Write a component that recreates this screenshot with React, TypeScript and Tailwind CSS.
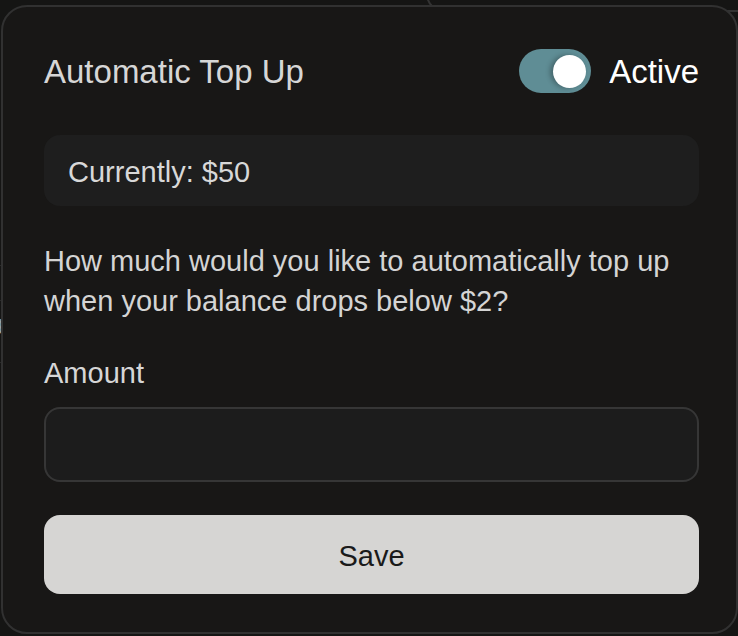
import React from "react";

export default function App() {
  return (
    <div
      className="relative w-[738px] h-[636px] overflow-hidden bg-[#151514]"
      style={{ fontFamily: '"Liberation Sans", Arial, sans-serif' }}
    >
      {/* page content peeking out behind the dialog */}
      <div className="absolute left-[426px] top-[-40px] w-[340px] h-[52px] rounded-[18px] border-2 border-[#333333]" />
      <div className="absolute left-[-4px] top-[265px] w-[6px] h-px bg-[#2a2a2a]" />
      <div className="absolute left-[-4px] top-[300px] w-[6px] h-px bg-[#2a2a2a]" />
      <div className="absolute left-[-4px] top-[362px] w-[6px] h-px bg-[#2a2a2a]" />
      <div className="absolute left-[-8px] top-[311px] text-[20px] leading-[24px] text-[#a0a0a0]">g</div>

      <div className="relative mt-[5px] ml-[1px] w-[737px] h-[629px] rounded-[26px] border-2 border-[#313131] bg-[#181716] pt-[42px] pb-[38px] pl-[41px] pr-[37px] flex flex-col">
        <div className="flex items-center justify-between h-[44px]">
          <span className="pt-[2px] text-[33px] leading-[40px] text-[#d6d6d6]">Automatic Top Up</span>
          <div className="flex items-center gap-[18px]">
            <div className="w-[72px] h-[44px] rounded-full bg-[#5f8d95] flex items-center justify-end pr-[5px]">
              <div className="w-[33px] h-[33px] rounded-full bg-white shadow-[-3px_0_5px_rgba(0,0,0,0.28)]" />
            </div>
            <span className="pt-[2px] text-[33px] leading-[40px] text-white">Active</span>
          </div>
        </div>

        <div className="mt-[42px] h-[71px] rounded-[16px] bg-[#1e1e1e] flex items-center pl-[24px] pt-[2px]">
          <span className="text-[29px] leading-[40px] text-[#d8d8d8]">Currently: $50</span>
        </div>

        <p className="mt-[35px] text-[29px] leading-[40px] text-[#d4d4d4]">
          How much would you like to automatically top up when your balance drops below $2?
        </p>

        <label className="mt-[32px] text-[29px] leading-[40px] text-[#d6d6d6]">Amount</label>

        <input
          type="text"
          className="mt-[14px] h-[75px] w-full rounded-[16px] border-2 border-[#363636] bg-[#1c1c1c] px-[22px] text-[29px] text-[#e0e0e0] outline-none"
        />

        <button className="mt-[33px] h-[79px] w-full rounded-[16px] bg-[#d6d5d3] pt-[3px] text-[29px] leading-[40px] text-[#1a1a1a]">
          Save
        </button>
      </div>
    </div>
  );
}
